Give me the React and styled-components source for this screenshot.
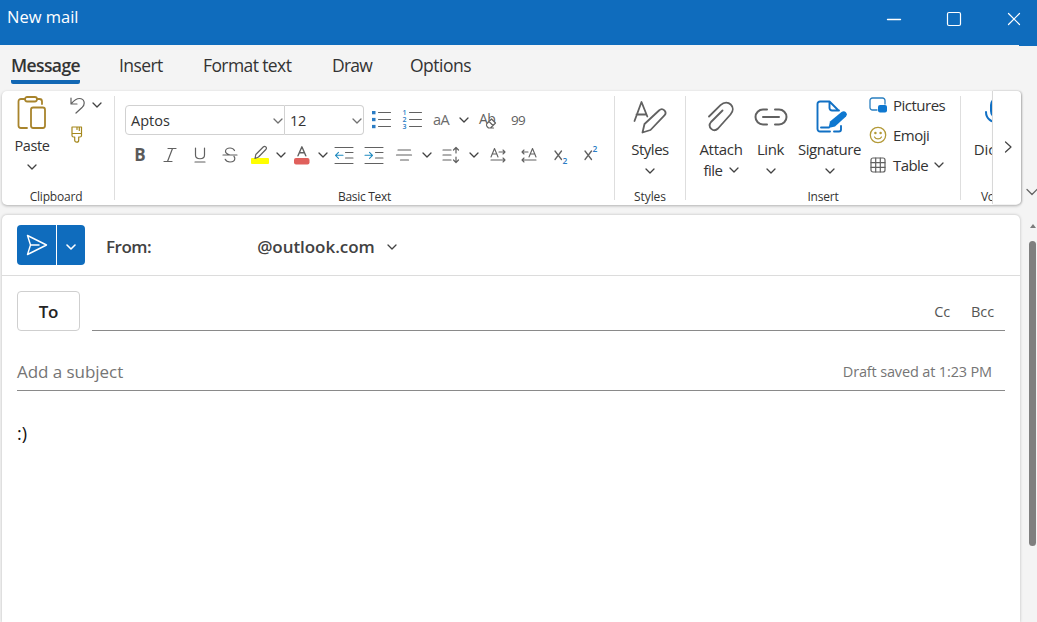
import React from 'react';
import styled, { createGlobalStyle, css } from 'styled-components';

const GlobalStyle = createGlobalStyle`
  * {
    box-sizing: border-box;
  }

  body {
    margin: 0;
    background: #f4f4f4;
    font-family: 'Open Sans', 'Noto Sans', sans-serif;
    color: #242424;
  }

  button {
    font: inherit;
    color: inherit;
    background: none;
    border: 0;
    padding: 0;
  }

  svg {
    display: block;
    flex: none;
  }
`;

const AppWindow = styled.div`
  display: flex;
  flex-direction: column;
  width: 1037px;
  height: 622px;
  overflow: hidden;
  background: #f4f4f4;
`;

const Text = styled.span`
  font-size: ${(p) => p.$size || 15}px;
  line-height: ${(p) => p.$line || 20}px;
  letter-spacing: ${(p) => p.$track || 0}px;
  font-weight: ${(p) => p.$weight || 400};
  color: ${(p) => p.$color || '#333'};
  white-space: nowrap;
`;

const TitleBar = styled.header`
  display: flex;
  justify-content: space-between;
  flex: none;
  height: 46px;
  padding: 6px 15px 0 7px;
  background: #0f6cbd;
`;

const WindowButtons = styled.div`
  display: flex;
  gap: 44px;
  padding-top: 5px;
  height: 21px;
`;

const Body = styled.div`
  display: flex;
  flex: 1;
  min-height: 0;
`;

const Main = styled.main`
  display: flex;
  flex-direction: column;
  width: 1019px;
  margin-top: -1px;
  background: #f4f4f4;
`;

const TabList = styled.nav`
  display: flex;
  flex: none;
  height: 46px;
  padding: 8px 0 0 11px;
`;

const TabButton = styled.button`
  display: flex;
  flex-direction: column;
  align-items: flex-start;
  width: ${(p) => p.$width}px;
  margin-right: ${(p) => p.$gap}px;
  height: 31px;
  border-bottom: 4px solid ${(p) => (p.$active ? '#1267b4' : 'transparent')};
  ${(p) => p.$active && css`
    border-radius: 0 0 2px 2px;
  `}
`;

const Ribbon = styled.section`
  display: flex;
  flex: none;
  width: 1019px;
  height: 114px;
  margin-left: 2px;
  background: #fff;
  border-radius: 5px;
  box-shadow: 0 1px 3px rgba(0, 0, 0, 0.28);
`;

const Group = styled.div`
  display: flex;
  flex-direction: column;
  flex: none;
  width: ${(p) => p.$width}px;
  padding-top: 5px;
  overflow: hidden;
`;

const GroupBody = styled.div`
  display: flex;
  height: 90px;
  padding-left: ${(p) => p.$left || 0}px;
  flex-direction: ${(p) => (p.$column ? 'column' : 'row')};
`;

const Caption = styled.div`
  text-align: center;
  height: 20px;
  line-height: 20px;
  padding-left: ${(p) => p.$left || 0}px;
  padding-right: ${(p) => p.$right || 0}px;
`;

const Divider = styled.div`
  flex: none;
  width: 1px;
  height: 104px;
  margin-top: 5px;
  background: #dedede;
`;

const BigButton = styled.button`
  display: flex;
  flex-direction: column;
  align-items: center;
  flex: none;
  width: ${(p) => p.$width}px;
  padding-top: ${(p) => p.$top || 0}px;
`;

const BigIcon = styled.span`
  display: flex;
  align-items: center;
  justify-content: center;
  height: 34px;
  margin-bottom: ${(p) => p.$gap || 0}px;
  padding-left: ${(p) => p.$left || 0}px;
`;

const BigChevron = styled.span`
  display: flex;
  align-items: center;
  gap: 6px;
  height: ${(p) => p.$height || 20}px;
`;

const SmallColumn = styled.div`
  display: flex;
  flex-direction: column;
  gap: 12px;
  padding-left: 8px;
`;

const UndoRow = styled.div`
  display: flex;
  align-items: center;
  gap: 7px;
  height: 18px;
`;

const ToolRow = styled.div`
  display: flex;
  align-items: center;
  height: 30px;
  margin-top: ${(p) => p.$top}px;
`;

const Combo = styled.div`
  display: flex;
  align-items: center;
  justify-content: space-between;
  width: ${(p) => p.$width}px;
  height: 30px;
  padding: 2px ${(p) => p.$right}px 0 5px;
  border: 1px solid #d1d1d1;
  border-radius: ${(p) => p.$radius};
  & + & {
    border-left: 0;
  }
`;

const Tool = styled.button`
  display: flex;
  align-items: center;
  justify-content: center;
  flex: none;
  width: ${(p) => p.$width || 30}px;
  height: 30px;
`;

const InsertList = styled.div`
  display: flex;
  flex-direction: column;
  padding-left: 7px;
`;

const InsertItem = styled.button`
  display: flex;
  align-items: center;
  gap: 6px;
  height: 30px;
  margin-top: ${(p) => p.$top || 0}px;
`;

const ScrollRight = styled.button`
  display: flex;
  align-items: center;
  justify-content: center;
  flex: none;
  width: 29px;
  height: 113px;
  padding: 0 0 2px 2px;
  background: #fff;
  border-left: 1px solid #d8d8d8;
  border-radius: 0 4px 4px 0;
  box-shadow: 1px 0 2px rgba(0, 0, 0, 0.2);
`;

const Message = styled.section`
  flex: 1;
  display: flex;
  flex-direction: column;
  width: 1018px;
  margin: 10px 0 0 2px;
  background: #fff;
  border-radius: 5px 5px 0 0;
  box-shadow: 0 0 3px rgba(0, 0, 0, 0.25);
`;

const SendRow = styled.div`
  display: flex;
  align-items: center;
  height: 61px;
  padding-left: 15px;
  border-bottom: 1px solid #dcdcdc;
`;

const SendButton = styled.div`
  display: flex;
  width: 68px;
  height: 40px;
  margin-right: 21px;
  background: #0f6cbd;
  border-radius: 4px;
`;

const SendPart = styled.button`
  display: flex;
  align-items: center;
  justify-content: center;
  width: ${(p) => p.$width}px;
  padding-top: ${(p) => p.$top || 0}px;
  & + & {
    border-left: 1px solid #fff;
  }
`;

const SenderLine = styled.div`
  display: flex;
  align-items: center;
  padding-top: 4px;
`;

const Sender = styled.div`
  display: flex;
  align-items: center;
  gap: 12px;
  padding-left: 106px;
`;

const RecipientRow = styled.div`
  display: flex;
  height: 40px;
  margin: 15px 15px 0 15px;
`;

const ToButton = styled.button`
  width: 63px;
  height: 40px;
  padding-top: 2px;
  border: 1px solid #cfcfcf;
  border-radius: 4px;
`;

const Field = styled.div`
  display: flex;
  flex: 1;
  align-items: center;
  justify-content: ${(p) => p.$justify || 'flex-end'};
  gap: 21px;
  height: 40px;
  margin-left: ${(p) => p.$left || 0}px;
  padding-top: 2px;
  padding-right: ${(p) => p.$right}px;
  border-bottom: 1px solid #8a8a8a;
`;

const SubjectRow = styled(RecipientRow)`
  margin-top: 20px;
`;

const Editor = styled.div`
  padding: 32px 15px 0;
`;

const Rail = styled.aside`
  display: flex;
  flex-direction: column;
  align-items: flex-end;
  width: 18px;
  overflow: hidden;
`;

const RailChevron = styled.div`
  margin: 142px -1px 0 0;
`;

const RailArrow = styled.div`
  width: 0;
  height: 0;
  margin: 28px 1px 0 0;
  border: 3px solid transparent;
  border-top: 0;
  border-bottom: 4px solid #7b7b7b;
`;

const RailThumb = styled.div`
  width: 7px;
  height: 305px;
  margin: 13px 1px 0 0;
  border-radius: 4px;
  background: #7f7f7f;
`;

const Svg = ({ w, h, color = '#616161', sw = 1.2, children }) => (
  <svg
    width={w}
    height={h}
    viewBox={`0 0 ${w} ${h}`}
    fill="none"
    stroke={color}
    strokeWidth={sw}
    strokeLinecap="round"
    strokeLinejoin="round"
  >
    {children}
  </svg>
);

const Chevron = ({ color = '#424242', sw = 1.3 }) => (
  <Svg w={10} h={6} color={color} sw={sw}>
    <path d="M1 1l4 4 4-4" />
  </Svg>
);

const PasteIcon = () => (
  <Svg w={30} h={34} color="#a8842c" sw={1.8}>
    <path d="M8 3H4a2.500 2.500 0 0 0-2.500 2.500v24A2.500 2.500 0 0 0 4 32h6M20 3h2.500A2.500 2.500 0 0 1 25 5.500V8" />
    <rect x="8" y="1" width="12" height="4.500" rx="2.200" />
    <rect x="14" y="11.500" width="14" height="20.500" rx="2.200" />
  </Svg>
);

const UndoIcon = () => (
  <Svg w={15} h={17}>
    <path d="M1 1v6h6M1.300 6.700C4 3.500 6.500 1.500 9.500 1.500c5 0 6 5.500 2.800 8.700L6 16" />
  </Svg>
);

const PainterIcon = () => (
  <Svg w={14} h={17} color="#a5881d" sw={1.2}>
    <path d="M2 1h9.500v8.500a1.500 1.500 0 0 1-1.500 1.500H8.700v3.200a2 2 0 0 1-4 0V11H3.500A1.500 1.500 0 0 1 2 9.500zM2 7.500h9.500M7 1v2.500M9.300 1v3.500" />
  </Svg>
);

const BulletsIcon = () => (
  <Svg w={20} h={20} sw={1.1}>
    <path d="M7.500 2.500h12M7.500 9.500h12M7.500 16.500h12" />
    <g fill="#2b7cc4" stroke="none">
      <rect x="1" y="1" width="3.500" height="3.300" />
      <rect x="1" y="7.900" width="3.500" height="3.300" />
      <rect x="1" y="14.900" width="3.500" height="3.300" />
    </g>
  </Svg>
);

const NumbersIcon = () => (
  <Svg w={20} h={22} sw={1.1}>
    <path d="M7.500 3.500h12M7.500 10.500h12M7.500 17.500h12" />
    <g fill="#2b7cc4" stroke="none" fontSize="7" fontWeight="600">
      <text x="0.500" y="6">1</text>
      <text x="0.500" y="13">2</text>
      <text x="0.500" y="20">3</text>
    </g>
  </Svg>
);

const ClearFormatIcon = () => (
  <Svg w={22} h={24}>
    <text x="1" y="15.500" fontSize="14" letterSpacing="-0.500" fill="#616161" stroke="none">Ab</text>
    <path fill="#fff" d="M9 15.500l4.500-4.500 4 4-5 5h-2L9 18.500c-.7-.7-.7-2 0-3zM11 13.500l4 4M11 20h4.500" />
  </Svg>
);

const StrikeIcon = () => (
  <Svg w={16} h={16}>
    <path d="M12.500 3.500C11.500 1.700 10 1 8 1 5.500 1 3.500 2.300 3.500 4.300c0 2 1.600 3 4.500 3.700M1 8h14M12 9.500c.6.600.8 1.200.8 2 0 2.200-2 3.500-4.800 3.500-2.300 0-4-.8-4.800-2.700" />
  </Svg>
);

const HighlightIcon = () => (
  <Svg w={20} h={20} sw={1.2}>
    <rect x="1" y="13" width="18" height="6" rx="1" fill="#ffff00" stroke="none" />
    <path d="M5 13.500l.8-4L13.200 2c1.800-1.800 4.300.7 2.600 2.500L8.500 12z" fill="#fff" />
  </Svg>
);

const FontColorIcon = () => (
  <Svg w={18} h={19} sw={1.4}>
    <rect x="1" y="12" width="15.500" height="6.500" rx="2" fill="#e0605c" stroke="none" />
    <path d="M5 9.800L8.900 0.800l3.900 9M6.300 6.800h5.200" />
  </Svg>
);

const IndentIcon = ({ right }) => (
  <Svg w={20} h={19} sw={1.1}>
    <path d="M1 1.500h18M11.500 6.500H19M11.500 12H19M1 17.500h18" />
    <path stroke="#1e8ac0" d={right ? 'M1 9.300h7.500M5.500 6.300l3 3-3 3' : 'M1.500 9.300H9M4.500 6.300l-3 3 3 3'} />
  </Svg>
);

const AlignIcon = () => (
  <Svg w={18} h={12}>
    <path d="M3 1h12.500M1.500 6h15M5.500 11h8" />
  </Svg>
);

const SpacingIcon = () => (
  <Svg w={18} h={18}>
    <path d="M1 4h8M1 9h8M1 14h8M14 1.500V7M14 11v5.500M11.500 4L14 1.500 16.500 4M11.500 14l2.500 2.500 2.500-2.500" />
  </Svg>
);

const DirectionIcon = ({ rtl }) => (
  <Svg w={16} h={16} sw={1.1}>
    {rtl ? (
      <path d="M8 10l3.500-8.500L15 10M9 7h5M7 5H1M3 3L1 5l2 2M15 13H1M3 11l-2 2 2 2" />
    ) : (
      <path d="M1 10l3.500-8.500L8 10M2 7h5M9 5h6M13 3l2 2-2 2M1 13h14M13 11l2 2-2 2" />
    )}
  </Svg>
);

const ScriptIcon = ({ sup }) => (
  <Svg w={16} h={26} sw={1.3}>
    <path d="M2 9l6.500 8.500M8.500 9L2 17.500" />
    <text x="9.500" y={sup ? 10 : 21.5} fontSize="8.5" fontWeight="600" fill="#2b7cc4" stroke="none">2</text>
  </Svg>
);

const StylesIcon = () => (
  <Svg w={34} h={34} sw={1.8}>
    <path d="M1.500 21L8.500 2l5.800 14.500M3.500 14.500h9.500" />
    <path d="M9.500 32.500l2-8.500L26 10.500c3.800-3.500 8.800 1.500 5.200 5.200L17.500 30z" />
  </Svg>
);

const AttachIcon = () => (
  <Svg w={28} h={32} sw={1.8}>
    <path d="M2 15.500L13.500 4.200C21-2.500 30 6 23.500 13.500L11 27.500c-4.500 4.500-11-1.500-7-6.500L15.500 9.500" />
  </Svg>
);

const LinkIcon = () => (
  <Svg w={34} h={18} sw={2}>
    <path d="M13 1.500H9a7.500 7.500 0 0 0 0 15h4M21 1.500h4a7.500 7.500 0 0 1 0 15h-4M9 9h16" />
  </Svg>
);

const SignatureIcon = () => (
  <Svg w={32} h={34} color="#1170c4" sw={1.9}>
    <path d="M14 31.500H4A2.500 2.500 0 0 1 1.500 29V4A2.500 2.500 0 0 1 4 1.500h9.500l9 9M13.500 1.500V8a2.500 2.500 0 0 0 2.500 2.500h7M18 31.500h5a2 2 0 0 0 2-2V26M5 27.500h8" />
    <path fill="#0f78d0" stroke="none" d="M12.500 28l1.500-6.500L25.500 12c3.300-2.500 7 1.500 4.500 4.500L19 26.500z" />
  </Svg>
);

const PicturesIcon = () => (
  <Svg w={18} h={16} color="#2a7fc0" sw={1.3}>
    <path d="M8 13H3.500A2.500 2.500 0 0 1 1 10.500v-7A2.500 2.500 0 0 1 3.500 1h10A2.500 2.500 0 0 1 16 3.500V7" />
    <rect x="9" y="8" width="9" height="7.500" rx="2" fill="#0f78d0" stroke="none" />
  </Svg>
);

const EmojiIcon = () => (
  <Svg w={18} h={18} color="#b39a38" sw={1.3}>
    <circle cx="9" cy="9" r="7.700" />
    <path d="M5.500 11c1.500 2.500 5.500 2.500 7 0" />
    <circle cx="6.400" cy="7" r=".6" fill="#b39a38" />
    <circle cx="11.600" cy="7" r=".6" fill="#b39a38" />
  </Svg>
);

const TableIcon = () => (
  <Svg w={18} h={16} sw={1.2}>
    <rect x="2" y="1" width="14" height="14" rx="2" />
    <path d="M6.700 1v14M11.300 1v14M2 5.700h14M2 10.300h14" />
  </Svg>
);

const MicIcon = () => (
  <Svg w={26} h={34} color="#1170c4" sw={2}>
    <rect x="6" y="2" width="14" height="20" rx="7" fill="#1170c4" />
    <path d="M1 16c0 14 24 14 24 0M13 26.500v6" />
  </Svg>
);

const SendIcon = () => (
  <Svg w={22} h={22} color="#fff" sw={1.4}>
    <path d="M1.500 1.500l19 9.500-19 9.500 3-9.500zM4.500 11h8.500" />
  </Svg>
);

const tabs = [
  { name: 'Message', width: 69, gap: 39, track: -0.6 },
  { name: 'Insert', width: 43, gap: 41, track: -0.6 },
  { name: 'Format text', width: 89, gap: 40, track: -0.6 },
  { name: 'Draw', width: 40, gap: 38, track: -0.8 },
  { name: 'Options', width: 62, gap: 0, track: -0.5 },
];

const ClipboardGroup = () => (
  <Group $width={112}>
    <GroupBody>
      <BigButton $width={60}>
        <BigIcon><PasteIcon /></BigIcon>
        <Text $size={14.5} $track={-0.4} $line={32}>Paste</Text>
        <BigChevron $height={10}><Chevron /></BigChevron>
      </BigButton>
      <SmallColumn>
        <UndoRow>
          <UndoIcon />
          <Chevron />
        </UndoRow>
        <PainterIcon />
      </SmallColumn>
    </GroupBody>
    <Caption $right={4}>
      <Text $size={12} $track={-0.2}>Clipboard</Text>
    </Caption>
  </Group>
);

const BasicTextGroup = () => (
  <Group $width={499}>
    <GroupBody $column $left={10}>
      <ToolRow $top={9}>
        <Combo $width={160} $right={1} $radius="4px 0 0 4px">
          <Text $size={14.5} $track={0} $line={22}>Aptos</Text>
          <Chevron color="#707070" />
        </Combo>
        <Combo $width={79} $right={1} $radius="0 4px 4px 0">
          <Text $size={14.5} $track={-0.2} $line={22}>12</Text>
          <Chevron color="#707070" />
        </Combo>
        <Tool $width={34}><BulletsIcon /></Tool>
        <Tool $width={28}><NumbersIcon /></Tool>
        <Tool><Text $size={14.5} $track={-0.6} $color="#6b6b6b">aA</Text></Tool>
        <Tool $width={16}><Chevron /></Tool>
        <Tool $width={34}><ClearFormatIcon /></Tool>
        <Tool $width={24}><Text $size={13.5} $track={-0.8} $color="#616161">99</Text></Tool>
      </ToolRow>
      <ToolRow $top={5}>
        <Tool><Text $size={17} $weight={700} $color="#5a5a5a">B</Text></Tool>
        <Tool>
          <Svg w={14} h={16}><path d="M5 1.500h8M1 14.500h8M9.500 1.500l-5 13" /></Svg>
        </Tool>
        <Tool>
          <Svg w={12} h={16}><path d="M1.500 1v7c0 5 9 5 9 0V1M1 15h10" /></Svg>
        </Tool>
        <Tool><StrikeIcon /></Tool>
        <Tool><HighlightIcon /></Tool>
        <Tool $width={11}><Chevron /></Tool>
        <Tool $width={31}><FontColorIcon /></Tool>
        <Tool $width={12}><Chevron /></Tool>
        <Tool><IndentIcon /></Tool>
        <Tool><IndentIcon right /></Tool>
        <Tool><AlignIcon /></Tool>
        <Tool $width={15}><Chevron /></Tool>
        <Tool $width={34}><SpacingIcon /></Tool>
        <Tool $width={12}><Chevron /></Tool>
        <Tool $width={35}><DirectionIcon /></Tool>
        <Tool $width={28}><DirectionIcon rtl /></Tool>
        <Tool $width={35}><ScriptIcon /></Tool>
        <Tool $width={26}><ScriptIcon sup /></Tool>
      </ToolRow>
    </GroupBody>
    <Caption>
      <Text $size={12} $track={-0.3}>Basic Text</Text>
    </Caption>
  </Group>
);

const StylesGroup = () => (
  <Group $width={70}>
    <GroupBody>
      <BigButton $width={70} $top={4}>
        <BigIcon $gap={4}><StylesIcon /></BigIcon>
        <Text $size={15} $track={-0.5} $line={22}>Styles</Text>
        <BigChevron $height={22}><Chevron /></BigChevron>
      </BigButton>
    </GroupBody>
    <Caption>
      <Text $size={12} $track={-0.1}>Styles</Text>
    </Caption>
  </Group>
);

const InsertGroup = () => (
  <Group $width={274}>
    <GroupBody $left={12}>
      <BigButton $width={46} $top={4}>
        <BigIcon $gap={4}><AttachIcon /></BigIcon>
        <Text $size={15} $track={-0.3} $line={22}>Attach</Text>
        <BigChevron>
          <Text $size={15} $track={-0.5}>file</Text>
          <Chevron />
        </BigChevron>
      </BigButton>
      <BigButton $width={53} $top={4}>
        <BigIcon $gap={4}><LinkIcon /></BigIcon>
        <Text $size={15} $track={-0.4} $line={22}>Link</Text>
        <BigChevron $height={22}><Chevron /></BigChevron>
      </BigButton>
      <BigButton $width={65} $top={4}>
        <BigIcon $gap={4} $left={4}><SignatureIcon /></BigIcon>
        <Text $size={15} $track={-0.4} $line={22}>Signature</Text>
        <BigChevron $height={22}><Chevron /></BigChevron>
      </BigButton>
      <InsertList>
        <InsertItem $top={-6}>
          <PicturesIcon />
          <Text $size={15} $track={-0.5}>Pictures</Text>
        </InsertItem>
        <InsertItem>
          <EmojiIcon />
          <Text $size={15} $track={-0.5}>Emoji</Text>
        </InsertItem>
        <InsertItem>
          <TableIcon />
          <Text $size={15} $track={-0.6}>Table</Text>
          <Chevron />
        </InsertItem>
      </InsertList>
    </GroupBody>
    <Caption>
      <Text $size={12} $track={-0.2}>Insert</Text>
    </Caption>
  </Group>
);

const VoiceGroup = () => (
  <Group $width={31}>
    <GroupBody $left={12}>
      <BigButton $width={50} $top={0}>
        <BigIcon $gap={8}><MicIcon /></BigIcon>
        <Text $size={15} $track={-0.1} $line={22}>Dictate</Text>
      </BigButton>
    </GroupBody>
    <Caption $left={20}>
      <Text $size={12} $track={-0.3}>Voice</Text>
    </Caption>
  </Group>
);

function App() {
  return (
    <AppWindow>
      <GlobalStyle />
      <TitleBar>
        <Text $size={16.5} $track={0} $line={22} $color="#fff">New mail</Text>
        <WindowButtons>
          <Svg w={16} h={16} color="#fff" sw={1.4}><path d="M1.500 8.500h13" /></Svg>
          <Svg w={16} h={16} color="#fff" sw={1.2}><rect x="1.500" y="1.500" width="13" height="13" rx="1.500" /></Svg>
          <Svg w={16} h={16} color="#fff" sw={1.2}><path d="M2.500 2.500l11 11M13.500 2.500l-11 11" /></Svg>
        </WindowButtons>
      </TitleBar>
      <Body>
        <Main>
          <TabList>
            {tabs.map((tab, i) => (
              <TabButton key={tab.name} $active={i === 0} $width={tab.width} $gap={tab.gap}>
                <Text $size={17.5} $track={tab.track} $line={24} $weight={i === 0 ? 600 : 400}>{tab.name}</Text>
              </TabButton>
            ))}
          </TabList>
          <Ribbon>
            <ClipboardGroup />
            <Divider />
            <BasicTextGroup />
            <Divider />
            <StylesGroup />
            <Divider />
            <InsertGroup />
            <Divider />
            <VoiceGroup />
            <ScrollRight>
              <Svg w={8} h={12} color="#424242" sw={1.2}><path d="M1.500 1L7 6l-5.500 5" /></Svg>
            </ScrollRight>
          </Ribbon>
          <Message>
            <SendRow>
              <SendButton>
                <SendPart $width={39}><SendIcon /></SendPart>
                <SendPart $width={29} $top={3}><Chevron color="#fff" sw={1.6} /></SendPart>
              </SendButton>
              <SenderLine>
                <Text $size={17} $track={-0.5} $weight={600} $color="#424242">From:</Text>
                <Sender>
                  <Text $size={17} $track={-0.05} $weight={600} $color="#424242">@outlook.com</Text>
                  <Chevron />
                </Sender>
              </SenderLine>
            </SendRow>
            <RecipientRow>
              <ToButton><Text $size={17} $track={-0.2} $weight={600} $color="#242424">To</Text></ToButton>
              <Field $left={12} $right={11}>
                <Text $size={14.5} $track={-0.1} $color="#555">Cc</Text>
                <Text $size={14.5} $track={-0.1} $color="#555">Bcc</Text>
              </Field>
            </RecipientRow>
            <SubjectRow>
              <Field $justify="space-between" $right={13}>
                <Text $size={17} $track={-0.05} $color="#757575">Add a subject</Text>
                <Text $size={14.5} $track={-0.15} $color="#757575">Draft saved at 1:23 PM</Text>
              </Field>
            </SubjectRow>
            <Editor>
              <Text $size={18} $color="#111">:)</Text>
            </Editor>
          </Message>
        </Main>
        <Rail>
          <RailChevron><Svg w={12} h={8} color="#616161"><path d="M1 1.500l5 5 5-5" /></Svg></RailChevron>
          <RailArrow />
          <RailThumb />
        </Rail>
      </Body>
    </AppWindow>
  );
}

export default App;
